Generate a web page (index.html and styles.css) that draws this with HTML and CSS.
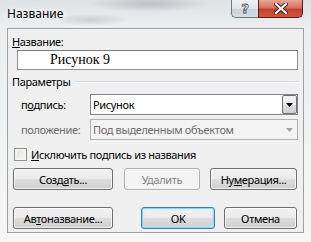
FILE: index.html
```html
<!DOCTYPE html>
<html lang="ru">
<head>
  <meta charset="UTF-8">
  <title>Название</title>
  <link rel="stylesheet" href="styles.css">
</head>
<body>
  <div class="window">
    <div class="titlebar">
      <span class="title">Название</span>
      <div class="caption-btns">
        <span class="cap help">?</span>
        <span class="cap close">
          <svg width="14" height="11" viewBox="0 0 14 11">
            <path d="M2 1 L12 10 M12 1 L2 10" stroke="#3d1a1a" stroke-width="4" stroke-linecap="square"/>
            <path d="M2 1 L12 10 M12 1 L2 10" stroke="#ffffff" stroke-width="2.2" stroke-linecap="square"/>
          </svg>
        </span>
      </div>
    </div>

    <div class="client">
      <div class="field-label"><u>Н</u>азвание:</div>
      <div class="text-field">Рисунок 9</div>

      <div class="group-head">
        <span>Параметры</span>
        <span class="group-line"></span>
      </div>

      <div class="param-row">
        <span class="param-label">п<u>о</u>дпись:</span>
        <div class="combo">
          <span class="combo-value">Рисунок</span>
          <span class="drop">
            <svg width="7" height="4" viewBox="0 0 7 4"><path d="M0 0 H7 L3.5 4 Z" fill="#000"/></svg>
          </span>
        </div>
      </div>

      <div class="param-row disabled">
        <span class="param-label">положение:</span>
        <div class="combo">
          <span class="combo-value">Под выделенным объектом</span>
          <span class="drop">
            <svg width="7" height="4" viewBox="0 0 7 4"><path d="M0 0 H7 L3.5 4 Z" fill="#a0a0a0"/></svg>
          </span>
        </div>
      </div>

      <label class="check">
        <span class="box"></span>
        <span><u>И</u>сключить подпись из названия</span>
      </label>

      <div class="btn-row">
        <button class="btn wide">Созд<u>а</u>ть...</button>
        <button class="btn del" disabled>Удалить</button>
        <button class="btn num">Ну<u>м</u>ерация...</button>
      </div>

      <div class="btn-row bottom">
        <button class="btn wide">Ав<u>т</u>оназвание...</button>
        <button class="btn ok">OK</button>
        <button class="btn cancel">Отмена</button>
      </div>
    </div>
  </div>
</body>
</html>
```

FILE: styles.css
```css
body {
  margin: 0;
  font-family: "Noto Sans", "Open Sans", sans-serif;
  font-size: 11px;
  letter-spacing: -0.35px;
  color: #000;
}
.window {
  width: 311px;
  height: 242px;
  box-sizing: border-box;
  padding: 0 7px 9px;
  display: flex;
  flex-direction: column;
  background:
    radial-gradient(ellipse 60px 8px at 150px 4px, rgba(120, 125, 130, 0.35), transparent),
    radial-gradient(ellipse 40px 6px at 90px 20px, rgba(120, 125, 130, 0.25), transparent),
    linear-gradient(180deg, #dfe2e5 0, #eceeef 28px, #f6f6f6 100%);
}
.titlebar {
  height: 28px;
  display: flex;
  justify-content: space-between;
  align-items: flex-start;
}
.title {
  margin-top: 5px;
  font-size: 12px;
  letter-spacing: 0;
  text-shadow: 0 0 6px #fff, 0 0 10px #fff;
}
.caption-btns {
  display: flex;
  margin-right: 1px;
}
.cap {
  height: 18px;
  box-sizing: border-box;
  display: flex;
  align-items: center;
  justify-content: center;
  border: 1px solid #6f7780;
  border-top: none;
}
.help {
  width: 27px;
  border-right: none;
  border-radius: 0 0 0 5px;
  background: linear-gradient(180deg, #eef1f4 0, #dfe5eb 50%, #c9d1da 51%, #d5dce3 100%);
  font: bold 13px "DejaVu Sans", sans-serif;
  color: #fff;
  -webkit-text-stroke: 0.8px #4a525b;
}
.close {
  width: 45px;
  border-color: #5a1d17;
  border-radius: 0 0 5px 0;
  background: linear-gradient(180deg, #e9a697 0, #d7715e 45%, #c2402d 55%, #d2563c 100%);
}

.client {
  flex: 1;
  border: 1px solid #9aa0a6;
  background: #f0f0f0;
  padding: 5px 5px 0 4px;
  display: flex;
  flex-direction: column;
}
.field-label {
  line-height: 15px;
}
.text-field {
  margin: 1px 0 0 5px;
  height: 20px;
  box-sizing: border-box;
  border: 1px solid #8f8f8f;
  border-top-color: #7a7a7a;
  background: #fff;
  padding-left: 32px;
  font: 14px "Liberation Serif", serif;
  letter-spacing: 0;
  line-height: 18px;
}
.group-head {
  margin-top: 4px;
  display: flex;
  align-items: center;
  line-height: 15px;
}
.group-line {
  flex: 1;
  height: 0;
  margin-left: 4px;
  border-top: 1px solid #d5dfe5;
  border-bottom: 1px solid #fff;
}
.param-row {
  display: flex;
  align-items: center;
  margin-top: 5px;
}
.param-row + .param-row {
  margin-top: 4px;
}
.param-label {
  width: 78px;
  padding-left: 9px;
  box-sizing: border-box;
}
.combo {
  flex: 1;
  height: 21px;
  box-sizing: border-box;
  border: 1px solid #828790;
  background: #fff;
  display: flex;
  align-items: center;
  padding-left: 2px;
}
.combo-value {
  flex: 1;
}
.drop {
  width: 15px;
  height: 19px;
  box-sizing: border-box;
  border: 1px solid #707070;
  border-radius: 2px;
  background: linear-gradient(180deg, #f2f2f2 0, #ebebeb 50%, #dddddd 51%, #cfcfcf 100%);
  display: flex;
  align-items: center;
  justify-content: center;
}
.disabled .param-label,
.disabled .combo-value {
  color: #6d6d6d;
}
.disabled .combo {
  background: #f4f4f4;
  border-color: #adb2b5;
}
.disabled .drop {
  border-color: transparent;
  background: none;
}
.check {
  margin-top: 8px;
  display: flex;
  align-items: center;
  line-height: 13px;
}
.box {
  width: 13px;
  height: 13px;
  box-sizing: border-box;
  margin: 0 4px 0 2px;
  border: 1px solid #8f8f8f;
  background: linear-gradient(135deg, #dcdcdc, #fbfbfb);
  box-shadow: inset 0 0 0 2px #f4f4f4;
}
.btn-row {
  display: flex;
  margin-top: 7px;
  padding-left: 1px;
}
.btn-row.bottom {
  margin-top: 17px;
}
.btn {
  height: 22px;
  box-sizing: border-box;
  border: 1px solid #707070;
  border-radius: 3px;
  background: linear-gradient(180deg, #f2f2f2 0, #ebebeb 50%, #dddddd 51%, #cfcfcf 100%);
  box-shadow: inset 0 0 0 1px rgba(255, 255, 255, 0.7);
  font: inherit;
  letter-spacing: inherit;
  color: #000;
  padding: 0;
}
.btn.wide {
  width: 100px;
}
.btn.del {
  width: 76px;
  margin-left: 11px;
  border-color: #adb2b5;
  background: #f4f4f4;
  box-shadow: none;
  color: #838383;
}
.btn.num {
  width: 87px;
  margin-left: 10px;
}
.btn.ok {
  width: 74px;
  margin-left: 28px;
  border-color: #3c7fb1;
  box-shadow: inset 0 0 0 1px #8fd3f5, inset 0 0 2px 2px rgba(190, 230, 250, 0.6);
}
.btn.cancel {
  width: 73px;
  margin-left: 9px;
}
```
